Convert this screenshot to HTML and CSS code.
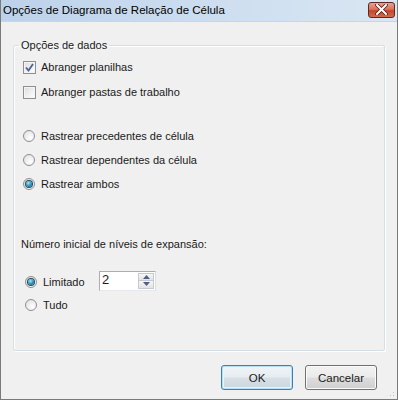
FILE: index.html
```html
<!DOCTYPE html>
<html lang="pt">
<head>
    <meta charset="UTF-8">
    <title>Opções de Diagrama de Relação de Célula</title>
    <link rel="stylesheet" href="styles.css">
</head>
<body>
    <div class="window">
        <div class="titlebar">
            <span class="title">Opções de Diagrama de Relação de Célula</span>
            <span class="close-btn">
                <svg width="13" height="11" viewBox="0 0 13 11">
                    <path d="M2 1 L11 10 M11 1 L2 10" stroke="#5a1a10" stroke-width="3.6" stroke-linecap="round"/>
                    <path d="M2 1 L11 10 M11 1 L2 10" stroke="#ffffff" stroke-width="2" stroke-linecap="round"/>
                </svg>
            </span>
        </div>

        <div class="client">
            <fieldset class="group">
                <legend>Opções de dados</legend>

                <div class="row row-first">
                    <span class="check checked">
                        <svg width="9" height="9" viewBox="0 0 9 9">
                            <path d="M1 4.5 L3.5 7.5 L8 1" fill="none" stroke="#4a5f97" stroke-width="1.8"/>
                        </svg>
                    </span>
                    <span class="label">Abranger planilhas</span>
                </div>
                <div class="row">
                    <span class="check"></span>
                    <span class="label">Abranger pastas de trabalho</span>
                </div>

                <div class="row row-gap">
                    <span class="radio"></span>
                    <span class="label">Rastrear precedentes de célula</span>
                </div>
                <div class="row">
                    <span class="radio"></span>
                    <span class="label">Rastrear dependentes da célula</span>
                </div>
                <div class="row">
                    <span class="radio selected"><span class="dot"></span></span>
                    <span class="label">Rastrear ambos</span>
                </div>

                <div class="row row-text">
                    <span>Número inicial de níveis de expansão:</span>
                </div>

                <div class="row row-sub row-limit">
                    <span class="radio selected"><span class="dot"></span></span>
                    <span class="label label-limit">Limitado</span>
                    <span class="spin">
                        <span class="spin-value">2</span>
                        <span class="spin-buttons">
                            <span class="spin-up"><svg width="7" height="4" viewBox="0 0 7 4"><path d="M0 4 L3.5 0 L7 4 Z" fill="#4d6185"/></svg></span>
                            <span class="spin-down"><svg width="7" height="4" viewBox="0 0 7 4"><path d="M0 0 L3.5 4 L7 0 Z" fill="#4d6185"/></svg></span>
                        </span>
                    </span>
                </div>
                <div class="row row-sub">
                    <span class="radio"></span>
                    <span class="label">Tudo</span>
                </div>
            </fieldset>

            <div class="buttons">
                <button class="btn btn-default">OK</button>
                <button class="btn">Cancelar</button>
            </div>
            <span class="grip"></span>
        </div>
    </div>
</body>
</html>
```

FILE: styles.css
```css
body {
    margin: 0;
    padding: 0;
    font-family: "Liberation Sans", Arial, sans-serif;
    font-size: 11px;
    color: #1a1a1a;
    background: #f0f0f0;
}
.window {
    width: 398px;
    height: 400px;
    box-sizing: border-box;
    border: 1px solid #7a7a7a;
    border-top: none;
    display: flex;
    flex-direction: column;
    background: #f0f0f0;
}
.titlebar {
    height: 21px;
    flex: none;
    display: flex;
    align-items: center;
    justify-content: space-between;
    padding: 0 2px 0 2px;
    background: linear-gradient(to right, #bcd2ea, #cfdff0 60%, #d9e6f3);
    border-bottom: 1px solid #c7d5e4;
}
.title {
    font-size: 11.5px;
    color: #000;
    margin-top: -1px;
}
.close-btn {
    width: 27px;
    height: 16px;
    margin-top: -2px;
    border: 1px solid #5b2a25;
    border-radius: 3px;
    box-sizing: border-box;
    display: flex;
    align-items: center;
    justify-content: center;
    background: linear-gradient(#e8a190 0%, #d9735b 45%, #c8442a 55%, #d46a4a 100%);
}
.client {
    flex: 1;
    position: relative;
    padding: 15px 12px 0 12px;
}
.group {
    margin: 0;
    padding: 0;
    height: 314px;
    box-sizing: border-box;
    border: 1px solid #d5dfe5;
    box-shadow: inset 1px 1px 0 #fff, 1px 1px 0 #fff;
    border-radius: 2px;
}
.group legend {
    margin-left: 5px;
    padding: 0 2px;
    line-height: 16px;
}
.row {
    display: flex;
    align-items: center;
    height: 24px;
    padding-left: 9px;
}
.row-first {
    margin-top: 2px;
}
.row + .row {
    margin-top: 1px;
}
.row.row-gap {
    margin-top: 20px;
}
.row + .row-gap + .row,
.row-gap + .row + .row {
    margin-top: 0;
}
.row.row-text {
    margin-top: 36px;
    padding-left: 7px;
}
.row.row-sub {
    padding-left: 11px;
    height: 23px;
    margin-top: 0;
}
.row.row-limit {
    margin-top: 14px;
}
.label {
    margin-left: 5px;
}
.label-limit {
    width: 56px;
}
.check {
    width: 13px;
    height: 13px;
    box-sizing: border-box;
    border: 1px solid #8f8f8f;
    background: linear-gradient(135deg, #dcdcdc, #ffffff);
    box-shadow: inset 0 0 0 1px #f4f4f4;
    display: flex;
    align-items: center;
    justify-content: center;
}
.radio {
    width: 12px;
    height: 12px;
    box-sizing: border-box;
    border: 1px solid #8f8f8f;
    border-radius: 50%;
    background: radial-gradient(circle at 65% 70%, #ffffff, #dcdcdc);
    display: flex;
    align-items: center;
    justify-content: center;
    margin-right: 1px;
}
.radio .dot {
    width: 6px;
    height: 6px;
    border-radius: 50%;
    background: radial-gradient(circle at 40% 35%, #a8e8f5, #2a8bb0 55%, #0e4a66);
    box-shadow: 0 0 0 1px #1b4d66;
}
.spin {
    width: 57px;
    height: 20px;
    box-sizing: border-box;
    border: 1px solid #abadb3;
    border-right-color: #dbdfe6;
    border-bottom-color: #e3e9ef;
    background: #fff;
    display: flex;
    justify-content: space-between;
    margin-top: -2px;
}
.spin-value {
    padding-left: 2px;
    font-size: 13px;
    line-height: 16px;
}
.spin-buttons {
    width: 16px;
    display: flex;
    flex-direction: column;
    padding: 1px;
}
.spin-up,
.spin-down {
    flex: 1;
    display: flex;
    align-items: center;
    justify-content: center;
    border: 1px solid #c7c9d0;
    background: linear-gradient(#f6f6f6, #e3e3e3);
}
.spin-down {
    border-top: none;
}
.buttons {
    display: flex;
    justify-content: flex-end;
    gap: 12px;
    margin-top: 14px;
    padding-right: 8px;
}
.btn {
    width: 72px;
    height: 25px;
    font-family: "Liberation Sans", Arial, sans-serif;
    font-size: 11.5px;
    color: #1a1a1a;
    border: 1px solid #707070;
    border-radius: 3px;
    background: linear-gradient(#f2f2f2 0%, #ebebeb 48%, #dddddd 52%, #cfcfcf 100%);
    box-shadow: inset 0 0 0 1px #fbfbfb;
    padding: 0;
}
.btn-default {
    border-color: #3c7fb1;
    background: linear-gradient(#f0f4f7 0%, #e6ecf0 48%, #d8e0e6 52%, #ccd6dd 100%);
    box-shadow: inset 0 0 0 1px #b8e0f5, inset 0 0 0 2px #e6f4fb;
}
.grip {
    position: absolute;
    right: 1px;
    bottom: 1px;
    width: 10px;
    height: 10px;
    background: radial-gradient(circle, #c0c0c0 0.8px, transparent 1px) 0 0 / 3px 3px;
    clip-path: polygon(100% 0, 100% 100%, 0 100%);
}
```
